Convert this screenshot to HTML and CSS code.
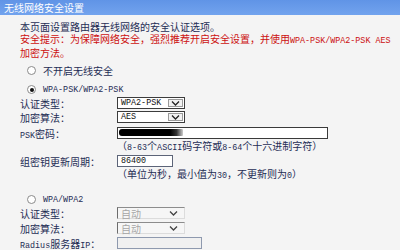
FILE: index.html
```html
<!DOCTYPE html>
<html lang="zh-CN">
<head>
    <meta charset="UTF-8">
    <title>无线网络安全设置</title>
    <link rel="stylesheet" href="styles.css">
</head>
<body>
    <div class="titlebar">无线网络安全设置</div>

    <div class="content">
        <p class="intro">本页面设置路由器无线网络的安全认证选项。</p>
        <p class="warn">安全提示：为保障网络安全，强烈推荐开启安全设置，并使用<span class="en">WPA-PSK/WPA2-PSK AES</span><br>加密方法。</p>

        <label class="radio-row first"><input type="radio" name="sec"> 不开启无线安全</label>

        <label class="radio-row second"><input type="radio" name="sec" checked> <span class="en">WPA-PSK/WPA2-PSK</span></label>
        <div class="form-row">
            <span class="label">认证类型：</span>
            <div class="select">
                <span class="value en">WPA2-PSK</span>
                <span class="arrow-box"><svg width="9" height="5" viewBox="0 0 9 5"><path d="M1 0.5 L4.5 4 L8 0.5" fill="none" stroke="#222" stroke-width="1.3"/></svg></span>
            </div>
        </div>
        <div class="form-row">
            <span class="label">加密算法：</span>
            <div class="select">
                <span class="value en">AES</span>
                <span class="arrow-box"><svg width="9" height="5" viewBox="0 0 9 5"><path d="M1 0.5 L4.5 4 L8 0.5" fill="none" stroke="#222" stroke-width="1.3"/></svg></span>
            </div>
        </div>
        <div class="form-row gap">
            <span class="label"><span class="en">PSK</span>密码：</span>
            <div class="field-wrap">
                <input type="text" class="field psk" value="">
                <span class="redact"></span>
            </div>
        </div>
        <div class="hint">（<span class="en">8-63</span>个<span class="en">ASCII</span>码字符或<span class="en">8-64</span>个十六进制字符）</div>
        <div class="form-row gap">
            <span class="label">组密钥更新周期：</span>
            <input type="text" class="field period en" value="86400">
        </div>
        <div class="hint">（单位为秒，最小值为<span class="en">30</span>，不更新则为<span class="en">0</span>）</div>

        <label class="radio-row third"><input type="radio" name="sec"> <span class="en">WPA/WPA2</span></label>
        <div class="form-row">
            <span class="label">认证类型：</span>
            <div class="select disabled">
                <span class="value">自动</span>
                <span class="arrow-box"><svg width="9" height="5" viewBox="0 0 9 5"><path d="M1 0.5 L4.5 4 L8 0.5" fill="none" stroke="#444" stroke-width="1.3"/></svg></span>
            </div>
        </div>
        <div class="form-row tight">
            <span class="label">加密算法：</span>
            <div class="select disabled">
                <span class="value">自动</span>
                <span class="arrow-box"><svg width="9" height="5" viewBox="0 0 9 5"><path d="M1 0.5 L4.5 4 L8 0.5" fill="none" stroke="#444" stroke-width="1.3"/></svg></span>
            </div>
        </div>
        <div class="form-row tight">
            <span class="label"><span class="en">Radius</span>服务器<span class="en">IP</span>：</span>
            <input type="text" class="field radius" value="" disabled>
        </div>
        <div class="next-field"></div>
    </div>
</body>
</html>
```

FILE: styles.css
```css
/* Page */
body {
    margin: 0;
    padding: 0;
    background-color: #f4f4f4;
    color: #1f2d55;
    font-family: "Noto Sans CJK SC", "Noto Sans", sans-serif;
    font-size: 10px;
    overflow: hidden;
}

/* Latin text in the half-width style of the router UI */
.en {
    font-family: "Liberation Mono", monospace;
    font-size: 8.4px;
}

/* Title bar */
.titlebar {
    height: 15px;
    line-height: 15px;
    padding-left: 4px;
    color: #fff;
    background: linear-gradient(#6094e6, #72a3ee);
}

.content {
    padding-left: 20px;
}

/* Intro text */
.intro,
.warn {
    margin: 0;
    line-height: 12px;
    white-space: nowrap;
}

.intro {
    margin-top: 6px;
}

.warn {
    color: #cc1010;
}

/* Radio rows */
.radio-row {
    display: flex;
    align-items: center;
    height: 13px;
    padding-left: 7px;
    gap: 7px;
}

.radio-row.first {
    margin-top: 5px;
}

.radio-row.second {
    margin-top: 6px;
}

.radio-row.third {
    margin-top: 13px;
}

.radio-row input {
    appearance: none;
    margin: 0;
    width: 9px;
    height: 9px;
    border: 1px solid #8a8a8a;
    border-radius: 50%;
    background: #fff;
    position: relative;
}

.radio-row input:checked::after {
    content: "";
    position: absolute;
    left: 1.5px;
    top: 1.5px;
    width: 4px;
    height: 4px;
    border-radius: 50%;
    background: #111;
}

/* Form rows */
.form-row {
    display: flex;
    align-items: center;
    height: 14px;
}

.form-row.gap {
    margin-top: 2px;
}

.form-row.tight {
    margin-top: 1px;
}

.label {
    width: 97px;
    flex-shrink: 0;
}

.hint {
    height: 12px;
    line-height: 12px;
    padding-left: 97px;
    white-space: nowrap;
}

/* Select boxes */
.select {
    box-sizing: border-box;
    width: 68px;
    height: 12px;
    display: flex;
    align-items: center;
    justify-content: space-between;
    background: #fff;
    border: 1px solid #3c3c3c;
    padding: 0 1px 0 3px;
    color: #111;
}

.select .arrow-box {
    box-sizing: border-box;
    width: 15px;
    height: 8px;
    display: flex;
    align-items: center;
    justify-content: center;
    border: 1px solid #9a9a9a;
    background: #f2f2f2;
}

.select.disabled {
    background: #f6f6f6;
    border-color: #8c8c8c #dcdcdc #dcdcdc #6c6c6c;
    color: #a6a6a6;
}

.select.disabled .arrow-box {
    border: none;
    background: none;
    margin-right: 2px;
}

/* Text fields */
.field {
    box-sizing: border-box;
    height: 12px;
    margin: 0;
    padding: 0 0 0 3px;
    border: 1px solid #3a3a3a;
    background: #fff;
    color: #111;
    outline: none;
}

.field-wrap {
    position: relative;
    display: flex;
}

.field.psk {
    width: 211px;
}

.redact {
    position: absolute;
    left: 2px;
    top: 2px;
    width: 64px;
    height: 7px;
    border-radius: 3px 1px 1px 3px;
    background: linear-gradient(90deg, #000 80%, #333 90%, rgba(0, 0, 0, 0.2));
}

.field.period {
    width: 56px;
    height: 12px;
    border-color: #5c6478;
}

.field.radius {
    width: 85px;
    border-color: #8e99ae;
    background: #f0f0f0;
}

/* top edge of the next field, cut off by the frame */
.next-field {
    margin: 1px 0 0 97px;
    width: 34px;
    height: 4px;
    border-top: 1px solid #3a3a3a;
}
```
